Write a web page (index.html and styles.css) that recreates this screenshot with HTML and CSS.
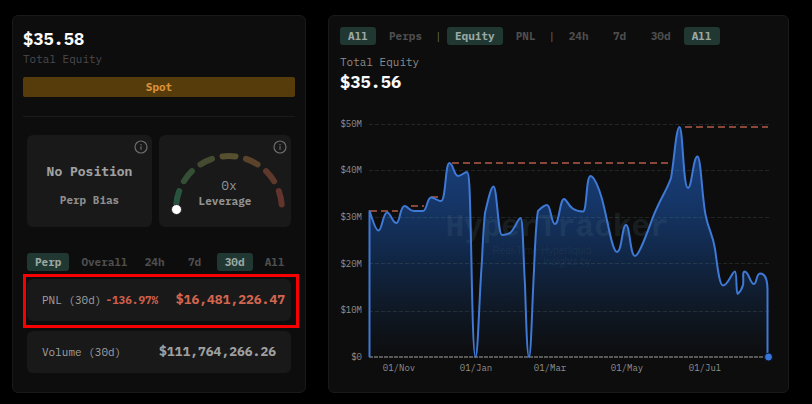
FILE: index.html
```html
<!DOCTYPE html>
<html lang="en">
<head>
  <meta charset="UTF-8">
  <meta name="viewport" content="width=device-width, initial-scale=1.0">
  <title>HyperTracker</title>
  <link rel="stylesheet" href="styles.css">
</head>
<body>
  <main class="dashboard">
    <section class="card summary">
      <div class="equity">$35.58</div>
      <div class="equity-label dim">Total Equity</div>
      <div class="spot">Spot</div>
      <hr class="divider">

      <div class="tiles">
        <div class="tile">
          <button class="info" type="button" aria-label="About perp bias">
            <svg viewBox="0 0 14 14"><circle cx="7" cy="7" r="6"/><path d="M7 6.3v3.4M7 4v1.2"/></svg>
          </button>
          <div class="position">No Position</div>
          <div class="bias">Perp Bias</div>
        </div>
        <div class="tile">
          <button class="info" type="button" aria-label="About leverage">
            <svg viewBox="0 0 14 14"><circle cx="7" cy="7" r="6"/><path d="M7 6.3v3.4M7 4v1.2"/></svg>
          </button>
          <svg class="gauge" viewBox="159 135 132 92">
            <path stroke="#28543f" d="M176.3 203.5A53 53 0 0 1 179.2 191"/>
            <path stroke="#344f35" d="M183.9 181.2A53 53 0 0 1 191.9 171.1"/>
            <path stroke="#434c30" d="M200.4 164.4A53 53 0 0 1 212 158.8"/>
            <path stroke="#56502f" d="M222.5 156.4A53 53 0 0 1 235.5 156.4"/>
            <path stroke="#5b432b" d="M246 158.8A53 53 0 0 1 257.6 164.4"/>
            <path stroke="#5e392b" d="M266.1 171.1A53 53 0 0 1 274.1 181.2"/>
            <path stroke="#62342c" d="M278.8 191A53 53 0 0 1 281.7 204.5"/>
            <circle class="needle" cx="176.5" cy="209.5" r="5"/>
            <text class="gauge-value" x="229" y="190">0x</text>
            <text class="gauge-label" x="225" y="205">Leverage</text>
          </svg>
        </div>
      </div>

      <div class="tabs period-tabs">
        <div class="tab-group">
          <button class="tab active" type="button">Perp</button>
          <button class="tab" type="button">Overall</button>
        </div>
        <div class="tab-group">
          <button class="tab" type="button">24h</button>
          <button class="tab" type="button">7d</button>
          <button class="tab active" type="button">30d</button>
          <button class="tab" type="button">All</button>
        </div>
      </div>

      <div class="stats">
        <div class="stat highlighted">
          <span class="stat-label">PNL (30d)</span>
          <span class="change">-136.97%</span>
          <span class="amount loss">$16,481,226.47</span>
        </div>
        <div class="stat">
          <span class="stat-label">Volume (30d)</span>
          <span class="amount">$111,764,266.26</span>
        </div>
      </div>
    </section>

    <section class="card history">
      <div class="tabs chart-tabs">
        <button class="tab active" type="button">All</button>
        <button class="tab" type="button">Perps</button>
        <span class="separator">|</span>
        <button class="tab active" type="button">Equity</button>
        <button class="tab" type="button">PNL</button>
        <span class="separator">|</span>
        <button class="tab" type="button">24h</button>
        <button class="tab" type="button">7d</button>
        <button class="tab" type="button">30d</button>
        <button class="tab active" type="button">All</button>
      </div>
      <div class="equity-label">Total Equity</div>
      <div class="equity">$35.56</div>

      <svg class="chart" viewBox="340 114 437 266">
        <defs>
          <linearGradient id="fill" gradientUnits="userSpaceOnUse" x1="0" y1="124" x2="0" y2="357">
            <stop offset="0" stop-color="#1a4384"/>
            <stop offset="0.35" stop-color="#153566"/>
            <stop offset="0.55" stop-color="#112849"/>
            <stop offset="0.8" stop-color="#0f1824"/>
            <stop offset="1" stop-color="#0d0d0e"/>
          </linearGradient>
        </defs>

        <!-- equity area -->
        <path id="equity" fill="url(#fill)" d="M369.5 357V211C372 217 375 230.5 378.5 230.5C382 230.5 383 212.5 387 212.5C391 212.5 392 223 396.5 223C400 223 400 206 404.5 206C408 206 409 211 414 211H423C427 211 427 197.5 431 197.5C435 197.5 437 201 441 201C446 201 445 163 449.5 163C453 163 454 176 458 176C462 176 464 172 467 172C470 172 470 206 471 240C472 290 473 357 475.5 357C478 357 479 300 482 260C483 238 484 222 485 213C488 200 491 186.5 493.5 186.5C497 186.5 498 235 502 235C507 235 508 234 510 233C515 229 518 218 520.5 218C523 218 523 250 525 285C526 315 527 357 529 357C531 357 532 308 534 270C535 245 536 221 538 211C541 208 544 205 547 205C551 205 551 224 555 224C559 224 560 199 564 199C568 199 568 211.5 583 211.5C587 211.5 586 176 590.5 176C594 176 599 188 602 199C608 221 612 252 617 252C622 252 622 225 626 225C630 225 630 256 635 256C639 256 647 233 653 217C660 199 667 190 671 178C674 163 676 127 679.5 127C683 127 683 188 688 188C692 188 693 156.5 697.5 156.5C701 156.5 702 200 706 217C709 231 713 235 715 249C717 262 719 285.5 723 285.5C728 285.5 732 271.5 735 271.5C737 271.5 736 294 737.5 294C740 292 742 289 743 285C744 280 742 271.5 744.5 271.5C749 271.5 750 284 754 284C757 284 756 273.5 760 273.5C765 273.5 767.5 278 767.5 290V357"/>

        <g class="watermark">
          <text class="brand" x="557" y="236">HyperTracker</text>
          <text x="591" y="254">Real-Time Hyperliquid</text>
          <text x="591" y="265">Insights by</text>
        </g>

        <path class="grid" d="M369 124.5H769M369 170.5H769M369 217.5H769M369 263.5H769M369 311.5H769"/>
        <path class="peaks" d="M370 211H398M411 206H424M431 197H441M452 163H671M685 127H768"/>
        <path class="baseline" d="M369 357H765"/>
        <use class="line" href="#equity"/>
        <circle class="marker" cx="768.5" cy="357" r="4"/>

        <g class="axis axis-y">
          <text x="362" y="127">$50M</text>
          <text x="362" y="173">$40M</text>
          <text x="362" y="220">$30M</text>
          <text x="362" y="267">$20M</text>
          <text x="362" y="313">$10M</text>
          <text x="362" y="360">$0</text>
        </g>
        <g class="axis axis-x">
          <text x="399" y="371">01/Nov</text>
          <text x="476" y="371">01/Jan</text>
          <text x="550" y="371">01/Mar</text>
          <text x="627" y="371">01/May</text>
          <text x="705" y="371">01/Jul</text>
        </g>
      </svg>
    </section>
  </main>
</body>
</html>
```

FILE: styles.css
```css
*, *::before, *::after {
  box-sizing: border-box;
}
body {
  margin: 0;
  background: #000;
  color: #a0a0a0;
  font-family: 'IBM Plex Mono', 'Liberation Mono', monospace;
  font-size: 11px;
  line-height: 20px;
}
button {
  padding: 0;
  border: none;
  background: none;
  color: inherit;
  font: inherit;
  cursor: pointer;
}

.dashboard {
  display: grid;
  grid-template-columns: 294fr 461fr;
  gap: 22px;
  padding: 15px 23px 11px 12px;
}
.card {
  min-width: 0;
  border: 1px solid #191919;
  border-radius: 6px;
  background: #0d0d0d;
}

/* Summary card */
.summary {
  padding: 13px 10px 19px;
}
.equity {
  color: #fafafa;
  font-size: 17px;
  font-weight: bold;
}
.equity-label {
  color: #8c8c8c;
}
.equity-label.dim {
  color: #4b4a50;
}
.spot {
  margin-top: 8px;
  border-radius: 2px;
  background: #573c0b;
  color: #d9923b;
  font-weight: bold;
  text-align: center;
}
.divider {
  height: 1px;
  margin: 19px 0 18px;
  border: none;
  background: #1b1b1b;
}
.tiles {
  display: grid;
  grid-template-columns: 125fr 132fr;
  gap: 7px;
  margin: 0 4px;
}
.tile {
  position: relative;
  min-height: 92px;
  border-radius: 6px;
  background: #191919;
  text-align: center;
}
.position {
  padding-top: 27px;
  font-size: 13px;
  font-weight: bold;
}
.bias {
  margin-top: 8px;
  font-weight: bold;
  color: #8e8e8e;
}
.info {
  position: absolute;
  top: 5px;
  right: 4px;
  width: 14px;
  height: 14px;
}
.info svg {
  display: block;
  fill: none;
  stroke: #6c6c6c;
  stroke-width: 1.2;
}
.gauge {
  display: block;
  width: 100%;
}
.gauge path {
  fill: none;
  stroke-width: 6;
  stroke-linecap: round;
}
.gauge text {
  fill: #929292;
  text-anchor: middle;
}
.gauge-value {
  font-size: 13px;
}
.gauge-label {
  font-weight: bold;
}
.needle {
  fill: #fff;
  stroke: #25252e;
  stroke-width: 1;
}

/* Tabs */
.tabs,
.tab-group {
  display: flex;
}
.tab {
  min-width: 36px;
  padding: 0 8px;
  border-radius: 3px;
  color: #4e4e4e;
  font-weight: bold;
  line-height: 18px;
}
.tab.active {
  background: #213731;
  color: #9aa8a3;
}
.period-tabs {
  gap: 1px;
  margin: 26px 0 8px 4px;
}
.tab-group {
  gap: 4px;
}

/* Stats */
.stats {
  display: grid;
  gap: 10px;
  margin: 0 4px;
}
.stat {
  position: relative;
  display: flex;
  align-items: center;
  min-height: 42px;
  padding: 0 15px;
  border-radius: 6px;
  background: #191919;
}
.stat.highlighted {
  padding-right: 6px;
}
.stat.highlighted::after {
  content: '';
  position: absolute;
  inset: -5px -8px -7px -4px;
  border: 3px solid #f80000;
}
.change {
  margin-left: 4px;
  color: #cb5f4c;
  font-weight: bold;
}
.amount {
  margin-left: auto;
  font-size: 13px;
  font-weight: bold;
}
.amount.loss {
  color: #d2654f;
}

/* Equity history card */
.history {
  padding: 11px 11px 12px;
}
.chart-tabs {
  gap: 5px;
  margin-bottom: 7px;
}
.separator {
  width: 7px;
  color: #6a6a6a;
  line-height: 18px;
}
.chart {
  display: block;
  width: 100%;
  margin-top: 22px;
}
.grid {
  fill: none;
  stroke: #6f8c84;
  stroke-opacity: 0.2;
  stroke-dasharray: 4 2;
}
.peaks {
  fill: none;
  stroke: #89473a;
  stroke-width: 2;
  stroke-dasharray: 7 4;
}
.baseline {
  fill: none;
  stroke: #a3a3a3;
  stroke-dasharray: 4 1;
}
.line {
  stroke: #3f79d6;
  stroke-width: 2;
  stroke-linejoin: round;
  fill-opacity: 0;
}
.marker {
  fill: #3876da;
  stroke: #0a1226;
}
.watermark {
  fill: #557b83;
  fill-opacity: 0.15;
  font-family: 'Liberation Sans', Arial, sans-serif;
  font-size: 10px;
  text-anchor: end;
}
.watermark .brand {
  fill-opacity: 0.18;
  font-family: 'Liberation Mono', monospace;
  font-size: 31px;
  font-weight: bold;
  text-anchor: middle;
}
.axis {
  fill: #8f8f8f;
  font-size: 9px;
}
.axis-y {
  text-anchor: end;
}
.axis-x {
  text-anchor: middle;
}
```
